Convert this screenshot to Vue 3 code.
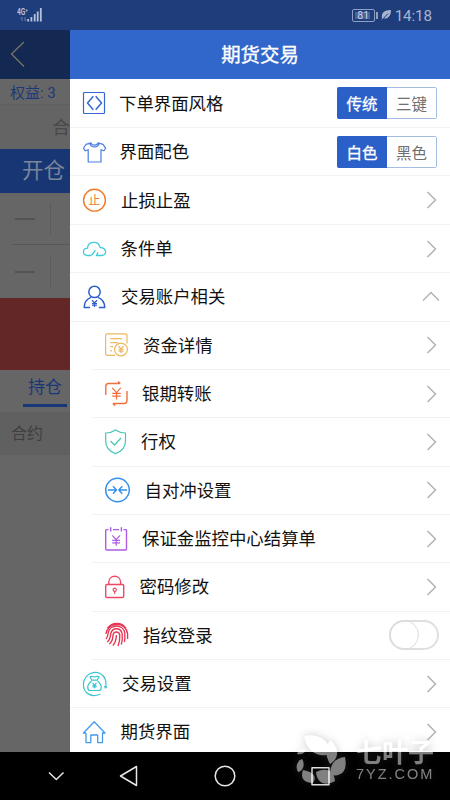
<script setup>
import { ref } from 'vue'

const yen = (x, y, s) =>
  `<path d="M${x - s} ${y - s * 1.3}L${x} ${y - s * 0.2}L${x + s} ${y - s * 1.3}M${x} ${y - s * 0.2}V${y + s * 1.4}M${x - s} ${y}H${x + s}M${x - s} ${y + s * 0.65}H${x + s}"/>`

const style = ref(0)
const theme = ref(0)

const rows = [
  { text: '下单界面风格', gap: 11, color: '#3468cf', options: ['传统', '三键'], model: style,
    icon: '<rect x="1.5" y="2.5" width="21" height="21" rx="1"/><path stroke-width="1.5" d="M11.3 6.3L5.5 13L11.3 19.7M13.7 6.3L19.5 13L13.7 19.7"/>' },
  { text: '界面配色', gap: 11.5, color: '#4b7ee0', options: ['白色', '黑色'], model: theme,
    icon: '<path d="M9 3.9L4 5.3L1.5 9.2L3.2 11.8L6.2 10.7V23H19V10.7L22 11.8L23.6 9.2L21 5.3L16 3.9C15.2 6.9 10 6.9 9 3.9ZM7.8 4.3C9 9 16 9 17.2 4.3"/>' },
  { text: '止损止盈', gap: 13, color: '#f17b2c', end: 'arrow',
    icon: '<circle cx="12.5" cy="13.2" r="10.9" stroke-width="1.4"/><text x="12.6" y="17.8" font-size="12" text-anchor="middle" fill="#f17b2c" stroke="none">止</text>' },
  { text: '条件单', gap: 12.5, color: '#3fcbdc', end: 'arrow',
    icon: '<path stroke-width="1.3" d="M9 19.5H5.5C.2 19.2-.1 12.5 5.5 12.2C6 5 16.4 4 18.2 11.5C24.8 11.8 25.2 19.2 20 19.5H14.5L16 16.4M9.4 19.5L13.5 14.2"/>' },
  { text: '交易账户相关', gap: 13, color: '#2c5fc9', end: 'up',
    icon: '<circle cx="12.5" cy="7.9" r="5.7" stroke-width="1.5"/><path stroke-width="1.4" d="M9 13.4C4.7 15 2.3 18.5 2.2 23.5H8M16 13.4C20.3 15 22.6 18.5 22.8 23.5H16.8"/>' + yen(12.5, 19.5, 2.5) },
  { text: '资金详情', sub: true, gap: 13, color: '#edb860', end: 'arrow',
    icon: '<path d="M23 11.5V3.5Q23 1.8 21 1.8H3.5Q1.6 1.8 1.6 3.5V21.5Q1.6 23.4 3.5 23.4H11M6.3 6.6H18M6.3 10.7H14M6.3 14.7H9M6.3 18.8H8"/><circle cx="17" cy="17.5" r="6.4"/>' + yen(17, 17.5, 2.5) },
  { text: '银期转账', sub: true, gap: 12, color: '#f07042', end: 'arrow',
    icon: '<path stroke-width="1.4" d="M1.8 14V5.5Q1.8 2.5 4.5 2.5H15.8M14 .6L16.3 2.5M23 10V19Q23 22.5 20 22.5H9M11.3 24.6L8.8 22.5"/>' + yen(12.5, 12.4, 4.3) },
  { text: '行权', sub: true, gap: 11, color: '#47c5b3', end: 'arrow',
    icon: '<path d="M11.5 .9C8.5 3 4.8 3.8 1.7 4V12C1.7 18.5 5 22.3 11.5 24.6C18 22.3 21.5 18.5 21.5 12V4C18 3.8 14.5 3 11.5 .9ZM6.5 12L10.5 16L17 9"/>' },
  { text: '自对冲设置', sub: true, gap: 14.5, color: '#3290ec', end: 'arrow',
    icon: '<circle cx="13.5" cy="13" r="11.8" stroke-width="1.5"/><path stroke-width="1.4" d="M4 13H12.3M9 9.2L12.5 13L9 16.8M23 13H14.8M18.3 9.2L14.8 13L18.3 16.8"/>' },
  { text: '保证金监控中心结算单', sub: true, gap: 12, color: '#ac5be4', end: 'arrow',
    icon: '<path stroke-width="1.4" d="M4.5 3.6H2.5Q1.7 3.6 1.7 4.6V23Q1.7 24 2.7 24H21.5Q22.5 24 22.5 23V4.6Q22.5 3.6 21.5 3.6H19.5M9 3.6H15M6.7 1.2V5.5M17.4 1.2V5.5"/>' + yen(12.2, 14.4, 3.9) },
  { text: '密码修改', sub: true, gap: 9.5, color: '#ee4964', end: 'arrow',
    icon: '<rect x="1.7" y="10.5" width="18" height="13" rx="1.2" stroke-width="1.4"/><path stroke-width="1.4" d="M4.8 10.5V8C5 .3 16.3 .3 16.6 8V10.5"/><circle cx="10.7" cy="15.7" r="1.6"/><path d="M10.7 17V20"/>' },
  { text: '指纹登录', sub: true, gap: 13, color: '#e63453', end: 'switch',
    icon: '<path stroke-width="1.35" d="M3.4 6.2C8-.3 18-.2 21.9 6.2M1.8 12C4-1 22-1 23.6 12V17M2 17C4 14.5 3.8 13 4.2 10.8C6 1.7 19 1.7 20.8 10.8C21 14 21 17 20.4 20M3.3 20C6.8 17 6.2 14.5 6.7 12C8 5 17 5 18.2 12C18.5 16 18.3 19.5 17.3 22.5M5.3 22C9.2 19 8.7 16 9 13C9.7 9 15 9 15.8 13C16 18 15.2 21 14 24M8.8 23.5C12 20.5 12.2 17 12.4 13"/>' },
  { text: '交易设置', gap: 14, color: '#3fc5d2', end: 'arrow',
    icon: '<path d="M18.3 23C9 27.5 1.2 21.5 1.4 13C2 .4 19-3.2 23.3 8.5C24.3 12 24.2 14.3 23.6 16.6M22.3 15L23.5 17L25 15.6"/><path d="M9.8 9.2L8 5.8Q10 5 12.5 6Q15 5 17 5.8L15.2 9.2ZM9.6 10C3.5 15 6 19.5 8 19.5H17C19 19.5 21.5 15 15.4 10"/>' + yen(12.5, 14.5, 2) },
  { text: '期货界面', gap: 12.5, color: '#4599ed', end: 'arrow',
    icon: '<path stroke-width="1.3" d="M4 14H1.5L12.2 2.8L23 14H20.5V23.6H15.7V16H8.8V23.6H4V14"/>' },
]
</script>

<template>
  <div class="phone">
    <header class="status">
      <svg class="signal" width="28" height="18" viewBox="0 0 28 18">
        <text x="0" y="6.5" textLength="11" lengthAdjust="spacingAndGlyphs">4G⁺</text>
        <path d="M5 9V13M3.5 10.5L5 9M8 9V13M9.3 11.5L8 13" class="faint" />
        <path d="M11.2 11V13.5M14.4 9V13.5M17.7 6V13.5M20.7 3.5V13.5M23.8 0V13.5" />
      </svg>
      <div class="status-right">
        <div class="battery">81</div>
        <i class="battery-tip"></i>
        <svg width="11" height="12" viewBox="0 0 11 12">
          <path d="M1 9C0 4 3 1 10 1C10 7 7 10 2.5 9.5L.7 11.5Z" fill="#a8b5d1" />
          <path d="M1 11L7 4.5" stroke="#1f3d7a" />
        </svg>
        <span class="time">14:18</span>
      </div>
    </header>

    <main class="screen">
      <aside class="behind">
        <div class="back">
          <svg width="16" height="28" viewBox="0 0 16 28"><path d="M14 2L1.5 14L14 26.5" /></svg>
        </div>
        <div class="equity">权益: 3</div>
        <div class="contract">合</div>
        <div class="open">开仓</div>
        <div class="field first"><i></i><b></b></div>
        <div class="field"><i></i><b></b></div>
        <div class="order"></div>
        <div class="tab"><span>持仓</span></div>
        <div class="column">合约</div>
      </aside>

      <section class="drawer">
        <h1>期货交易</h1>
        <div class="list">
          <div v-for="row in rows" :key="row.text" class="row" :class="{ sub: row.sub }">
            <svg class="icon" width="26" height="26" viewBox="0 0 26 26" :stroke="row.color" v-html="row.icon"></svg>
            <span class="label" :style="{ marginLeft: row.gap + 'px' }">{{ row.text }}</span>
            <div v-if="row.options" class="segment">
              <button v-for="(o, i) in row.options" :key="o" :class="{ on: row.model.value === i }" @click="row.model.value = i">{{ o }}</button>
            </div>
            <svg v-else-if="row.end === 'arrow'" class="arrow" width="11" height="18" viewBox="0 0 11 18"><path d="M1.5 1L9.5 9L1.5 17" /></svg>
            <svg v-else-if="row.end === 'up'" class="arrow up" width="18" height="11" viewBox="0 0 18 11"><path d="M1 9.5L9 1.5L17 9.5" /></svg>
            <div v-else class="switch"><i></i></div>
          </div>
        </div>
      </section>
    </main>

    <nav class="nav">
      <svg width="450" height="48" viewBox="0 0 450 48">
        <path d="M49 20.5L56.3 27.5L63.5 20.5M136.5 14.5V33.5L120.5 24Z" />
        <circle cx="225" cy="24" r="9.8" />
        <rect x="312" y="15.8" width="17" height="17" />
      </svg>
    </nav>

    <div class="watermark">
      <svg width="164" height="70" viewBox="0 0 164 70">
        <g class="leaves">
          <path d="M18 6C31 3 44 9 45 24C32 28 21 22 18 6Z" />
          <path d="M44 10C54 18 53 29 44 34C39 25 39 18 44 10Z" />
          <path d="M59 27C62 42 55 47 44 45C44 34 49 28 59 27Z" />
          <path d="M30 42C41 37 48 41 49 51C39 57 31 53 30 42Z" />
          <path d="M17 40C28 42 31 47 27 53C18 53 14 48 17 40Z" />
          <path d="M16 29C20 35 16 42 12 42C9 37 11 31 16 29Z" />
          <path d="M11 24C13 19 17 19 20 20C18 24 15 25 11 24Z" />
        </g>
        <text class="brand" x="70" y="31.5">七叶子</text>
        <text class="site" x="70" y="49">7YZ.COM</text>
      </svg>
    </div>
  </div>
</template>

<style>
body {
  margin: 0;
  overflow: hidden;
}
</style>

<style scoped>
.phone {
  position: relative;
  width: 450px;
  height: 800px;
  display: flex;
  flex-direction: column;
  overflow: hidden;
  background: #000;
  font-family: Roboto, "Noto Sans CJK SC", sans-serif;
}
* {
  box-sizing: border-box;
}
svg {
  display: block;
  flex: none;
  fill: none;
}
.status {
  height: 30px;
  flex: none;
  background: #1f3d7a;
  display: flex;
  justify-content: space-between;
  padding: 0 18px 0 17px;
}
.signal {
  margin-top: 8px;
  stroke: #b6c2dc;
  stroke-width: 1.8;
}
.signal text {
  font-size: 8.5px;
  font-weight: 700;
  fill: #b6c2dc;
  stroke: none;
}
.signal .faint {
  stroke: #627aa9;
  stroke-width: 1;
}
.status-right {
  display: flex;
  align-items: center;
  color: #a8b5d1;
}
.battery {
  width: 23px;
  height: 13px;
  border: 1px solid #8f9fc2;
  border-radius: 2px;
  font-size: 10.5px;
  line-height: 12px;
  text-align: center;
  color: #ccd5e8;
  background: linear-gradient(#4a629a, #4a629a) 2px 2px / 15px 7px no-repeat;
}
.battery-tip {
  width: 2px;
  height: 7px;
  margin: 0 3px 0 1px;
  background: #8f9fc2;
}
.time {
  font-size: 15.2px;
  margin-left: 3px;
  letter-spacing: -.1px;
  padding-top: 1px;
}
.screen {
  height: 722px;
  flex: none;
  display: flex;
  overflow: hidden;
}
.behind {
  width: 70px;
  background: #666;
  overflow: hidden;
  white-space: nowrap;
}
.back {
  height: 49px;
  background: #142951;
  padding: 10px 0 0 10px;
}
.back path {
  stroke: #77746c;
  stroke-width: 1.3;
}
.equity {
  height: 26px;
  line-height: 29px;
  padding-left: 10px;
  font-size: 15px;
  color: #1a3979;
  border-bottom: 1px solid #606060;
}
.contract {
  height: 44px;
  line-height: 46px;
  padding-left: 52px;
  font-size: 18px;
  color: #484848;
  background: #646464;
}
.open {
  height: 44px;
  line-height: 44px;
  padding-left: 22px;
  font-size: 21.5px;
  color: #7b8698;
  background: #183674;
}
.field {
  height: 53px;
  display: flex;
  align-items: center;
  gap: 15px;
  padding-left: 15px;
}
.field.first {
  height: 52px;
  background: linear-gradient(#585858, #585858) 13px 51px / 57px 1px no-repeat;
}
.field i {
  width: 20px;
  height: 2px;
  background: #535353;
}
.field b {
  width: 1px;
  height: 32px;
  background: #5c5c5c;
}
.order {
  height: 72px;
  background: #632727;
}
.tab {
  height: 42px;
  padding: 0 3px 0 23px;
}
.tab span {
  display: block;
  height: 37px;
  line-height: 34px;
  padding-left: 5px;
  font-size: 17px;
  color: #183779;
  border-bottom: 3px solid #183779;
}
.column {
  height: 43px;
  line-height: 44px;
  padding-left: 11px;
  font-size: 16px;
  color: #3f3f3f;
  background: #606060;
}
.drawer {
  width: 380px;
  background: #fff;
}
h1 {
  margin: 0;
  height: 49px;
  line-height: 52px;
  font-size: 19.4px;
  font-weight: 400;
  -webkit-text-stroke: .35px #fff;
  color: #fff;
  text-align: center;
  background: #3166cb;
}
.list {
  padding-top: .8px;
}
.row {
  height: 48.35px;
  display: flex;
  align-items: center;
  padding: 0 13px 0 12px;
  border-bottom: 1px solid #f2f2f2;
}
.row.sub {
  margin-left: 22px;
}
.icon {
  stroke-width: 1.2;
  stroke-linejoin: round;
}
.label {
  flex: 1;
  font-size: 17.4px;
  line-height: 26px;
  padding-top: 1px;
  color: #111;
  white-space: nowrap;
}
.arrow path {
  stroke: #b3b3b3;
  stroke-width: 1.5;
}
.arrow.up {
  margin-right: -3px;
}
.segment {
  display: flex;
  width: 100px;
  height: 32px;
  border: 1px solid #a5bde0;
  border-radius: 2px;
}
.segment button {
  flex: 1;
  border: 0;
  padding: 0;
  margin: 0;
  font: inherit;
  font-size: 15.5px;
  color: #707070;
  background: #fff;
}
.segment button.on {
  margin: -1px 0 -1px -1px;
  flex: 0 0 50px;
  border-radius: 2px 0 0 2px;
  color: #fff;
  -webkit-text-stroke: .3px #fff;
  background: #2b60c8;
}
.switch {
  width: 50px;
  height: 30px;
  margin-right: -2px;
  border: 2px solid #dfdfdf;
  border-radius: 15px;
}
.switch i {
  display: block;
  width: 30px;
  height: 30px;
  margin: -2px;
  border: 1px solid #dcdcdc;
  border-radius: 50%;
}
.nav {
  height: 48px;
  flex: none;
}
.nav svg {
  stroke: #e6e6e6;
  stroke-width: 1.5;
  stroke-linejoin: round;
}
.watermark {
  position: absolute;
  left: 286px;
  top: 730px;
  opacity: .5;
  filter: drop-shadow(0 0 4px rgba(90, 90, 90, .6));
}
.leaves {
  fill: #fff;
}
.brand {
  font-family: "Noto Sans CJK SC", sans-serif;
  font-size: 26px;
  font-weight: 700;
  fill: #fff;
}
.site {
  font-family: "Liberation Sans", sans-serif;
  font-size: 14.5px;
  letter-spacing: 2px;
  fill: #fff;
}
</style>
